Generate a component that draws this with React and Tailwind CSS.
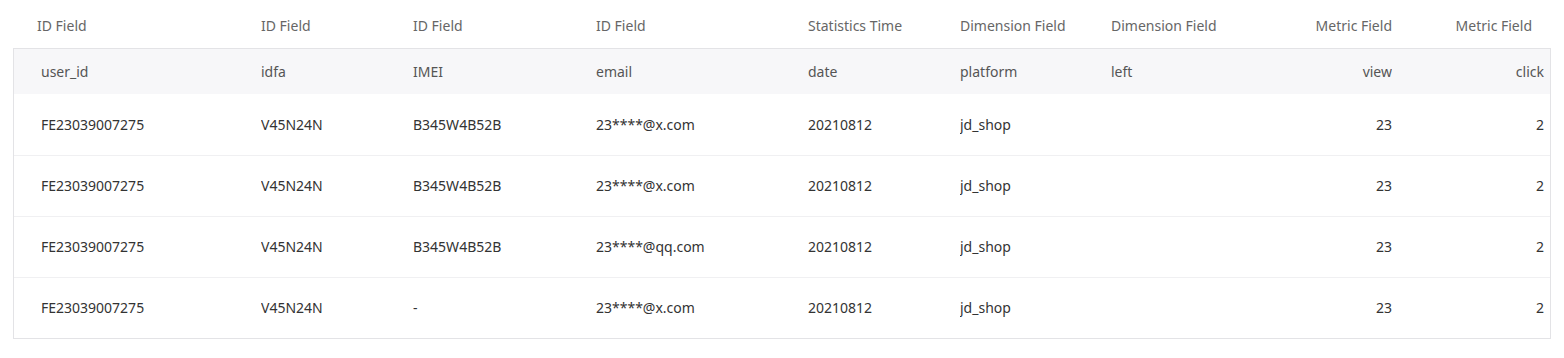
const headers = [
  { label: 'ID Field' },
  { label: 'ID Field' },
  { label: 'ID Field' },
  { label: 'ID Field' },
  { label: 'Statistics Time' },
  { label: 'Dimension Field' },
  { label: 'Dimension Field' },
  { label: 'Metric Field', right: true },
  { label: 'Metric Field', right: true },
];

const fieldRow = ['user_id', 'idfa', 'IMEI', 'email', 'date', 'platform', 'left', 'view', 'click'];

const rows = [
  ['FE23039007275', 'V45N24N', 'B345W4B52B', '23****@x.com', '20210812', 'jd_shop', '', '23', '2'],
  ['FE23039007275', 'V45N24N', 'B345W4B52B', '23****@x.com', '20210812', 'jd_shop', '', '23', '2'],
  ['FE23039007275', 'V45N24N', 'B345W4B52B', '23****@qq.com', '20210812', 'jd_shop', '', '23', '2'],
  ['FE23039007275', 'V45N24N', '-', '23****@x.com', '20210812', 'jd_shop', '', '23', '2'],
];

const cols = 'grid grid-cols-[247px_152px_183px_212px_152px_151px_139px_142px_162px]';

function Cells({ values, first, last }) {
  return values.map((v, i) => (
    <div
      key={i}
      className={`truncate ${i >= 7 ? 'text-right' : ''} ${i === 0 ? first : ''} ${i === 8 ? last : ''}`}
    >
      {v}
    </div>
  ));
}

export default function App() {
  return (
    <div
      className="bg-white px-[13px] text-[14px] leading-[20px] text-[#333]"
      style={{ fontFamily: '"Noto Sans", "Liberation Sans", sans-serif' }}
    >
      {/* column titles */}
      <div className={`${cols} h-[48px] items-center border-x border-transparent pt-[4px] text-[#666]`}>
        <Cells values={headers.map((h) => h.label)} first="pl-[23px]" last="pr-[22px]" />
      </div>

      <div className="border border-[#e3e3e6]">
        <div className={`${cols} h-[45px] items-center bg-[#f7f7f9] text-[#555]`}>
          <Cells values={fieldRow} first="pl-[27px]" last="pr-[10px]" />
        </div>
        {rows.map((r, idx) => (
          <div
            key={idx}
            className={`${cols} h-[61px] items-center ${idx > 0 ? 'border-t border-[#f0f0f2]' : ''}`}
          >
            <Cells values={r} first="pl-[27px]" last="pr-[10px]" />
          </div>
        ))}
      </div>
    </div>
  );
}
